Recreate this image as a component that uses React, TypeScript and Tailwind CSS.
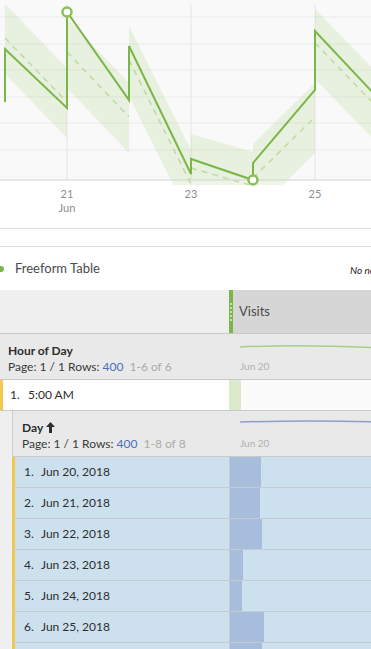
import React from "react";

const linePts: [number, number][] = [
  [5, 102], [5, 49], [67, 108], [67, 12], [129, 100], [129, 46], [191, 174], [191, 159],
  [253, 180], [253, 163], [315, 90], [315, 31], [377, 97],
];

const dashSegs: [number, number, number, number][] = [
  [5, 38, 67, 102],
  [67, 52, 129, 117],
  [129, 60, 191, 184],
  [191, 168, 253, 186],
  [253, 178, 315, 117],
  [315, 43, 377, 107],
];

function Chart() {
  const toPath = (pts: [number, number][]) => pts.map((p, i) => `${i ? "L" : "M"}${p[0]},${p[1]}`).join(" ");
  return (
    <svg width={371} height={228} viewBox="0 0 371 228" className="block">
      <defs>
        <clipPath id="plotclip">
          <rect x={0} y={0} width={371} height={185} />
        </clipPath>
      </defs>
      <rect x={0} y={0} width={371} height={180} fill="#f9f9f9" />
      {[17, 44, 70, 97, 123, 150].map((y) => (
        <line key={y} x1={0} x2={371} y1={y} y2={y} stroke="#ebebeb" strokeWidth={1} />
      ))}
      {[67, 191, 315].map((x) => (
        <line key={x} x1={x} x2={x} y1={4} y2={180} stroke="#e6e6e6" strokeWidth={1} />
      ))}
      <g clipPath="url(#plotclip)">
        {dashSegs.map(([x1, y1, x2, y2], i) => (
          <polygon
            key={i}
            points={`${x1},${y1 - 34} ${x2},${y2 - 34} ${x2},${y2 + 36} ${x1},${y1 + 36}`}
            fill="#8cc05a"
            fillOpacity={0.16}
          />
        ))}
        {dashSegs.map(([x1, y1, x2, y2], i) => (
          <line key={i} x1={x1} y1={y1} x2={x2} y2={y2} stroke="#bcdca2" strokeWidth={1.5} strokeDasharray="6 5" />
        ))}
      </g>
      <line x1={0} x2={371} y1={180} y2={180} stroke="#d2d2d2" strokeWidth={1} />
      <path d={toPath(linePts)} fill="none" stroke="#7ab648" strokeWidth={2} strokeLinejoin="miter" />
      <circle cx={67} cy={12} r={4.5} fill="#fff" stroke="#8cc05a" strokeWidth={2.5} />
      <circle cx={253} cy={180} r={4.5} fill="#fff" stroke="#8cc05a" strokeWidth={2.5} />
      <g fontFamily="Lato, 'Open Sans', sans-serif" fontSize={11} fill="#8c8c8c" textAnchor="middle">
        <text x={67} y={198}>21</text>
        <text x={67} y={212}>Jun</text>
        <text x={191} y={198}>23</text>
        <text x={315} y={198}>25</text>
      </g>
    </svg>
  );
}

function UpArrow() {
  return (
    <svg width={9} height={11} viewBox="0 0 9 11" className="inline-block ml-[3px] -mt-[2px]">
      <path d="M4.5 0 L9 5 L6 5 L6 11 L3 11 L3 5 L0 5 Z" fill="#2e2e2e" />
    </svg>
  );
}

const rows = [
  { n: "1.", d: "Jun 20, 2018", w: 31 },
  { n: "2.", d: "Jun 21, 2018", w: 30 },
  { n: "3.", d: "Jun 22, 2018", w: 32 },
  { n: "4.", d: "Jun 23, 2018", w: 13 },
  { n: "5.", d: "Jun 24, 2018", w: 12 },
  { n: "6.", d: "Jun 25, 2018", w: 34 },
  { n: "7.", d: "Jun 26, 2018", w: 32 },
];

export default function App() {
  return (
    <div
      className="w-[371px] h-[649px] overflow-hidden bg-white text-[#2f2f2f]"
      style={{ fontFamily: "Lato, 'Open Sans', sans-serif" }}
    >
      <Chart />
      <div className="h-[18px] border-t border-[#e0e0e0]" />
      <div className="h-[44px] border-t border-[#e0e0e0] flex items-center relative">
        <div className="absolute left-[-2px] top-[19px] w-[6px] h-[6px] rounded-full bg-[#7ab648]" />
        <span className="ml-[15px] text-[13px] text-[#4b4b4b]">Freeform Table</span>
        <span className="absolute left-[350px] top-[16px] text-[10px] italic text-[#222] whitespace-nowrap">No new data</span>
      </div>
      {/* header */}
      <div className="flex h-[44px] border-b border-[#c9c9c9]">
        <div className="w-[229px] bg-[#efefef]" />
        <div className="w-[4px] bg-[#7ab648] flex flex-col items-center justify-center gap-[2px]">
          {[0, 1, 2, 3, 4].map((i) => (
            <div key={i} className="w-[2px] h-[2px] bg-[#c5e0ae]" />
          ))}
        </div>
        <div className="flex-1 bg-[#d6d6d6] flex items-center pl-[6px] text-[13px] text-[#4b4b4b]">Visits</div>
      </div>
      {/* Hour of Day */}
      <div className="flex h-[46px] bg-[#e9e9e9] border-b border-[#c9c9c9]">
        <div className="w-[233px] pl-[8px] pt-[9px] leading-[16px] text-[12px]">
          <div className="font-bold text-[#2e2e2e]">Hour of Day</div>
          <div className="text-[#3a3a3a]">
            Page: 1 / 1 Rows: <span className="text-[#4b70b8]">400</span>
            <span className="text-[#ababab] ml-[6px]">1-6 of 6</span>
          </div>
        </div>
        <div className="flex-1 relative">
          <svg width={140} height={20} className="absolute left-[7px] top-[6px]">
            <path d="M0 7 Q 60 4 140 8" fill="none" stroke="#a7d084" strokeWidth={1.5} />
          </svg>
          <div className="absolute left-[7px] top-[25px] text-[10px] text-[#b0b0b0]">Jun 20</div>
        </div>
      </div>
      {/* 5:00 AM row */}
      <div className="flex h-[31px] border-b border-[#c9c9c9] bg-white">
        <div className="w-[229px] border-l-[3px] border-[#f2c94c] flex items-center text-[12px] text-[#2e2e2e]">
          <span className="ml-[7px] w-[18px]">1.</span>
          <span>5:00 AM</span>
        </div>
        <div className="w-[12px] bg-[#dbe9cc]" />
        <div className="flex-1 bg-[#fbfbfb]" />
      </div>
      {/* nested */}
      <div className="flex bg-[#efefef]">
        <div className="w-[12px] shrink-0" />
        <div className="flex-1 border-l border-[#cfcfcf]">
          <div className="flex h-[46px] bg-[#e9e9e9] border-b border-[#c9c9c9]">
            <div className="w-[220px] pl-[9px] pt-[9px] leading-[16px] text-[12px]">
              <div className="font-bold text-[#2e2e2e] flex items-center">
                Day
                <UpArrow />
              </div>
              <div className="text-[#3a3a3a]">
                Page: 1 / 1 Rows: <span className="text-[#4b70b8]">400</span>
                <span className="text-[#ababab] ml-[6px]">1-8 of 8</span>
              </div>
            </div>
            <div className="flex-1 relative">
              <svg width={140} height={20} className="absolute left-[7px] top-[4px]">
                <path d="M0 7 Q 70 5 140 7" fill="none" stroke="#8f9fcb" strokeWidth={1.5} />
              </svg>
              <div className="absolute left-[7px] top-[25px] text-[10px] text-[#b0b0b0]">Jun 20</div>
            </div>
          </div>
          {rows.map((r) => (
            <div key={r.n} className="flex h-[31px] bg-[#cde0ee] border-b border-[#c4ccd3] -ml-px">
              <div className="w-[218px] border-l-[3px] border-[#f2c94c] flex items-center text-[12px] text-[#2e2e2e] border-r border-r-[#c4ccd3]">
                <span className="ml-[9px] w-[17px]">{r.n}</span>
                <span>{r.d}</span>
              </div>
              <div className="flex-1 flex">
                <div className="bg-[#a8bcdb] h-full" style={{ width: r.w }} />
              </div>
            </div>
          ))}
        </div>
      </div>
    </div>
  );
}
